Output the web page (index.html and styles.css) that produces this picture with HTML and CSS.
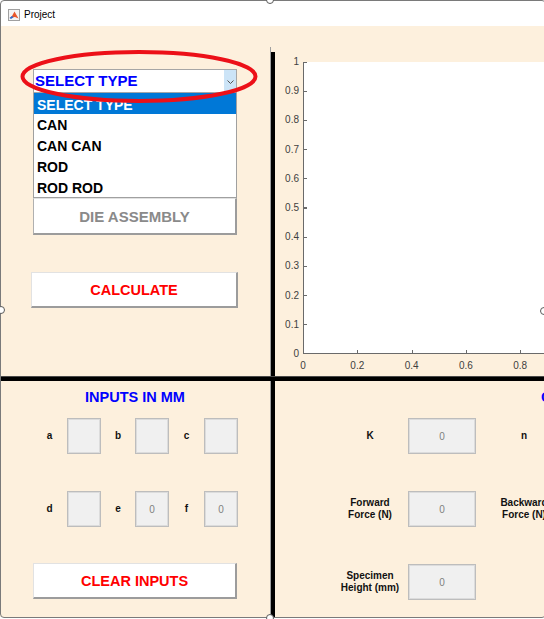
FILE: index.html
```html
<!DOCTYPE html>
<html>
<head>
<meta charset="utf-8">
<title>Project</title>
<link rel="stylesheet" href="styles.css">
</head>
<body>
<div class="window">
  <div class="titlebar">
    <svg class="appicon" viewBox="0 0 12 12"><rect x="0.5" y="0.5" width="11" height="11" fill="#f4f4f4" stroke="#a0a0a0"/><path d="M1.5 9 L4 7 L6.5 2.5 L8.5 6 L10.5 9.5 L7 8 Z" fill="#e8562a"/><path d="M1.5 9 L4 7 L5.5 8.2 L3 10 Z" fill="#2a6bd1"/></svg>
    <span class="title">Project</span>
  </div>
  <div class="content">
    <div class="top">
      <div class="tl">
        <div class="tl-frame">
          <svg class="ring" width="242" height="57" viewBox="0 0 242 57"><ellipse cx="121" cy="28.5" rx="116.5" ry="24.5" fill="none" stroke="#ec1018" stroke-width="4"/></svg>
          <div class="dropdown">
            <div class="dd-text">SELECT TYPE</div>
            <div class="dd-btn"><svg width="7" height="4" viewBox="0 0 7 4"><polyline points="0.5,0.5 3.5,3.5 6.5,0.5" fill="none" stroke="#555" stroke-width="1"/></svg></div>
            <div class="dd-list">
              <div class="dd-item sel">SELECT TYPE</div>
              <div class="dd-item">CAN</div>
              <div class="dd-item">CAN CAN</div>
              <div class="dd-item">ROD</div>
              <div class="dd-item">ROD ROD</div>
            </div>
          </div>
          <div class="btn btn-die">DIE ASSEMBLY</div>
          <div class="btn btn-calc">CALCULATE</div>
        </div>
      </div>
      <div class="vbar vbar-top"></div>
      <div class="tr">
        <div class="yticks">
          <span>1</span><span>0.9</span><span>0.8</span><span>0.7</span><span>0.6</span><span>0.5</span><span>0.4</span><span>0.3</span><span>0.2</span><span>0.1</span><span>0</span>
        </div>
        <div class="axes-col">
          <div class="axes"></div>
          <div class="xticks"><span>0</span><span>0.2</span><span>0.4</span><span>0.6</span><span>0.8</span></div>
        </div>
      </div>
    </div>
    <div class="hbar"></div>
    <div class="bottom">
      <div class="bl">
        <div class="heading">INPUTS IN MM</div>
        <div class="in-grid">
          <div class="lbl">a</div><div class="box"></div>
          <div class="lbl">b</div><div class="box"></div>
          <div class="lbl">c</div><div class="box"></div>
          <div class="lbl">d</div><div class="box"></div>
          <div class="lbl">e</div><div class="box">0</div>
          <div class="lbl">f</div><div class="box">0</div>
        </div>
        <div class="btn btn-clear">CLEAR INPUTS</div>
      </div>
      <div class="vbar"></div>
      <div class="br">
        <div class="heading heading-out">OUTPUTS</div>
        <div class="out-grid">
          <div class="lbl">K</div><div class="box">0</div><div class="lbl">n</div>
          <div class="lbl">Forward<br>Force (N)</div><div class="box">0</div><div class="lbl">Backward<br>Force (N)</div>
          <div class="lbl">Specimen<br>Height (mm)</div><div class="box">0</div><div class="lbl"></div>
        </div>
      </div>
    </div>
  </div>
  <div class="frame"></div>
  <div class="handle h-top"></div>
  <div class="handle h-left"></div>
  <div class="handle h-right"></div>
  <div class="handle h-bottom"></div>
</div>
</body>
</html>
```
FILE: styles.css
```css
* { box-sizing: border-box; margin: 0; padding: 0; }
body { margin: 0; background: #fff; font-family: "Liberation Sans", Arial, sans-serif; }

.window { position: relative; width: 544px; height: 619px; overflow: hidden; background: #fff; }

.titlebar { height: 26px; display: flex; align-items: center; padding: 3px 0 0 8px; gap: 4px; background: #fff; }
.appicon { width: 12px; height: 12px; flex: none; }
.title { font-size: 10px; color: #000; }

.content { height: 591px; background: #fdf0dd; display: flex; flex-direction: column; }

.top { height: 350px; display: flex; flex: none; }
.tl { width: 271px; flex: none; }
.tl-frame { position: relative; margin-top: 21px; height: 329px; border-right: 1px solid #a0a0a0; padding: 22px 0 0 33px; }

.ring { position: absolute; left: 18px; top: 1px; z-index: 3; }

.dropdown { position: relative; width: 204px; height: 24px; border: 1px solid #a6a6a6; background: #fff; display: flex; }
.dd-text { flex: 1; color: #0000ff; font-weight: bold; font-size: 15px; line-height: 22px; padding-left: 1px; white-space: nowrap; }
.dd-btn { width: 12px; flex: none; background: #cce4f7; display: flex; align-items: center; justify-content: center; padding-top: 1px; }
.dd-list { position: absolute; left: -1px; top: 23px; width: 204px; border: 1px solid #a0a0a0; border-top: none; background: #fff; z-index: 2; }
.dd-item { height: 20.8px; padding: 2.5px 0 0 3px; font-size: 14px; font-weight: bold; line-height: 18.3px; color: #000; white-space: nowrap; }
.dd-item.sel { background: #0078d7; color: #fff; }

.btn { display: flex; align-items: center; justify-content: center; background: #fff; border-top: 1px solid #e2e2e2; border-left: 1px solid #e2e2e2; border-right: 2px solid #9c9c9c; border-bottom: 2px solid #9c9c9c; font-weight: bold; font-size: 14.5px; white-space: nowrap; }
.btn-die { width: 204px; height: 37px; margin-top: 105px; color: #8a8a8a; font-size: 15px; border-left: 1px solid #b0b0b0; }
.btn-calc { width: 207px; height: 36px; margin-top: 37px; margin-left: -2px; color: #ff0000; }
.btn-clear { width: 204px; height: 36px; margin-top: 36px; margin-left: 33px; color: #ff0000; }

.vbar { width: 4px; background: #000; flex: none; }
.vbar-top { margin-top: 26px; }

.tr { flex: 1; display: flex; align-items: flex-start; padding-top: 36px; overflow: hidden; }
.yticks { width: 24px; flex: none; margin-right: 4px; margin-top: -6px; height: 304px; display: flex; flex-direction: column; justify-content: space-between; text-align: right; font-size: 10px; line-height: 12px; color: #404040; }
.axes-col { flex: none; width: 272px; }
.axes { height: 292px; background-color: #fff; border-left: 1px solid #6a6a6a; border-bottom: 1px solid #6a6a6a;
  background-image: repeating-linear-gradient(to bottom, #6a6a6a 0 1px, transparent 1px 29.1px), repeating-linear-gradient(to right, transparent 0 53.3px, #6a6a6a 53.3px 54.3px);
  background-size: 3px 100%, 100% 3px;
  background-position: left top, left bottom;
  background-repeat: no-repeat; }
.xticks { display: grid; grid-template-columns: repeat(5, 54.3px); margin-left: -27.15px; margin-top: 6px; text-align: center; font-size: 10px; line-height: 12px; color: #404040; }

.hbar { height: 5px; flex: none; background: #000; border-top: 1px solid #4a4a4a; }

.bottom { flex: 1; display: flex; }
.bl { width: 271px; flex: none; border-right: 1px solid #a0a0a0; padding-top: 8px; }
.heading { height: 17px; margin-bottom: 12px; font-size: 14.5px; font-weight: bold; line-height: 17px; color: #0000ff; text-align: center; white-space: nowrap; }

.in-grid { display: grid; grid-template-columns: 35px 34px 34px 34px 35px 34px; grid-auto-rows: 36px; row-gap: 37px; margin-left: 32px; align-items: center; }
.lbl { text-align: center; font-size: 10px; font-weight: bold; line-height: 12px; color: #111; white-space: nowrap; }
.box { height: 36px; background: #f0f0f0; border: 1px solid #bdbdbd; box-shadow: inset 0 0 0 1px #dcdcdc; display: flex; align-items: center; justify-content: center; font-size: 10px; color: #808080; }

.br { flex: 1; overflow: hidden; padding-top: 8px; }
.heading-out { text-align: left; padding-left: 266px; }
.out-grid { display: grid; grid-template-columns: 76px 68px 96px; grid-auto-rows: 36px; row-gap: 37px; margin-left: 57px; align-items: center; }

.frame { position: absolute; left: 0; top: 0; width: 546px; height: 618px; border: 1px solid #7a7a7a; border-radius: 4px; pointer-events: none; }
.handle { position: absolute; width: 8px; height: 8px; border: 1.5px solid #5a5a5a; background: #fff; border-radius: 50%; }
.h-top { left: 266px; top: -4px; }
.h-left { left: -3px; top: 306px; }
.h-right { left: 540px; top: 307px; }
.h-bottom { left: 266px; top: 614px; }
```
